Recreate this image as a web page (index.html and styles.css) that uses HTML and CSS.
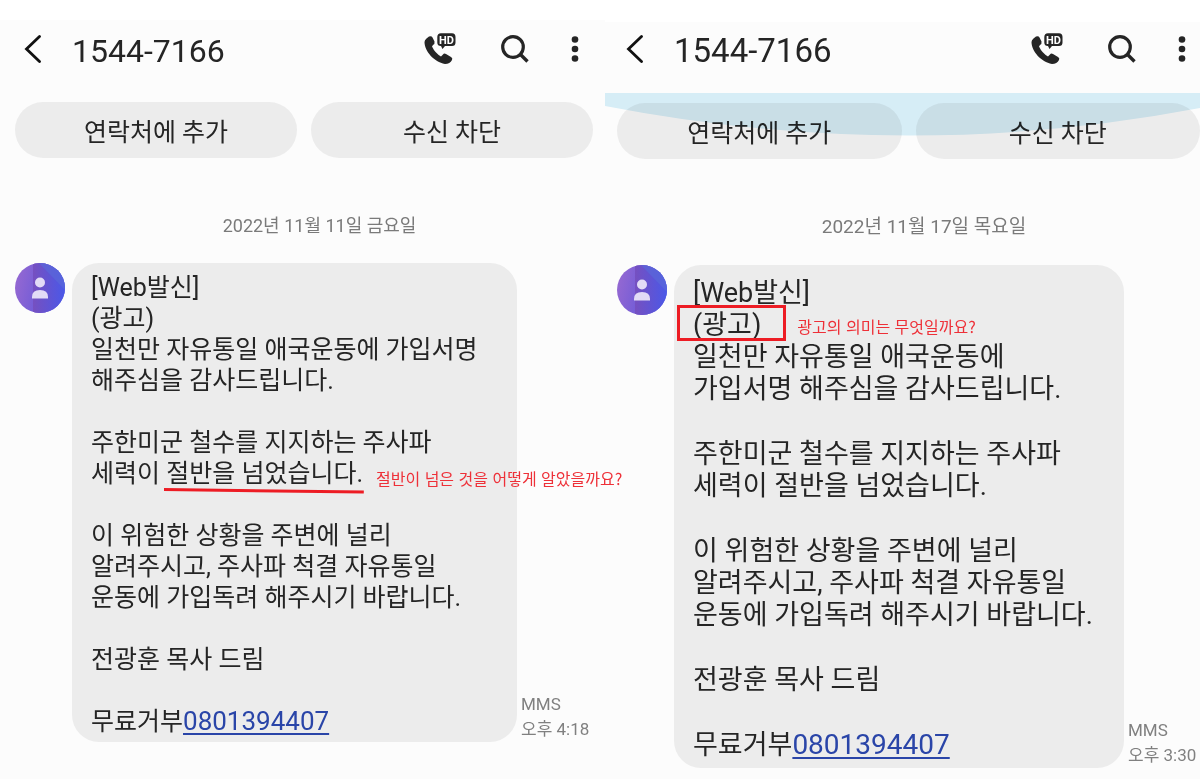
FILE: index.html
```html
<!DOCTYPE html>
<html lang="ko">
<head>
    <meta charset="utf-8">
    <title>1544-7166</title>
    <link rel="stylesheet" href="styles.css">
</head>
<body>
    <!-- Shared icons -->
    <svg class="sprite" width="0" height="0" aria-hidden="true">
        <defs>
            <linearGradient id="avatar-fill" x1="0" y1="0.4" x2="1" y2="0.6">
                <stop offset="0" stop-color="#9468d2"/>
                <stop offset="1" stop-color="#5050dc"/>
            </linearGradient>
            <linearGradient id="avatar-shade" x1="0" y1="0" x2="1" y2="0">
                <stop offset="0" stop-color="#7650c0"/>
                <stop offset="1" stop-color="#4a58e8"/>
            </linearGradient>
            <clipPath id="avatar-clip"><circle cx="25" cy="25" r="25"/></clipPath>
        </defs>
        <symbol id="back" viewBox="0 0 18 28">
            <path d="M15.500 1.500L2.500 14L15.500 26.500" fill="none" stroke="#111" stroke-width="2.800" stroke-linecap="round"/>
        </symbol>
        <symbol id="call" viewBox="0 0 32 32">
            <path d="M2.500 5.500L5 3.500Q7.500 2.500 8.500 4.500L10.500 8.500Q11 11 9 12L8 13.500Q11 20 17 23.500L19 21.500Q20 20 22 21L27 24Q29 25 28 27Q26 31 21 31C10 29 0.500 18 0.500 9Q0.500 7 2.500 5.500Z" fill="#252525"/>
            <path d="M17 0.200H28Q31.500 0.200 31.500 4V9.500Q31.500 13 28 13H21L18.500 16L17 13Q13.300 13 13.300 9.500V4Q13.300 0.200 17 0.200Z" fill="#252525"/>
        </symbol>
        <symbol id="search" viewBox="0 0 28 28">
            <circle cx="12" cy="12" r="10.300" fill="none" stroke="#252525" stroke-width="3.200"/>
            <path d="M19.500 19.500L26.500 26.500" stroke="#252525" stroke-width="3.400"/>
        </symbol>
        <symbol id="more" viewBox="0 0 8 28">
            <g fill="#252525">
                <circle cx="4" cy="4.500" r="3.300"/>
                <circle cx="4" cy="14" r="3.300"/>
                <circle cx="4" cy="23.500" r="3.300"/>
            </g>
        </symbol>
        <symbol id="person" viewBox="0 0 50 50">
            <g clip-path="url(#avatar-clip)">
                <rect width="50" height="50" fill="url(#avatar-fill)"/>
                <rect x="18" width="32" height="50" fill="url(#avatar-shade)"/>
                <path d="M24 0L50 27V0Z" fill="#5a68d8" opacity="0.700"/>
            </g>
            <circle cx="25" cy="19.500" r="5" fill="#e2dbf6"/>
            <path d="M17 35.500V34Q17 27 25 27Q33 27 33 34V35.500Z" fill="#e2dbf6"/>
        </symbol>
    </svg>

    <main class="compare">
        <section class="phone first">
            <header class="topbar">
                <button class="icon-btn back" aria-label="뒤로"><svg width="18" height="28"><use href="#back"/></svg></button>
                <h1>1544-7166</h1>
                <button class="icon-btn call" aria-label="전화"><svg width="32" height="32"><use href="#call"/><text x="22.500" y="10.500" text-anchor="middle" class="hd">HD</text></svg></button>
                <button class="icon-btn" aria-label="검색"><svg width="28" height="28"><use href="#search"/></svg></button>
                <button class="icon-btn more" aria-label="더보기"><svg width="8" height="28"><use href="#more"/></svg></button>
            </header>
            <div class="actions">
                <button class="pill">연락처에 추가</button>
                <button class="pill">수신 차단</button>
            </div>
            <p class="date">2022년 11월 11일 금요일</p>
            <div class="message">
                <svg class="avatar" width="50" height="50"><use href="#person"/></svg>
                <div class="bubble">
                    <p>[Web발신]<br>(광고)<br>일천만 자유통일 애국운동에 가입서명<br>해주심을 감사드립니다.</p>
                    <p>주한미군 철수를 지지하는 주사파<br>세력이 <span class="marked">절반을 넘었습니다.<svg class="underline" viewBox="0 0 202 6" preserveAspectRatio="none"><path d="M1 1.500L201 4" stroke="#ed1c24" stroke-width="3"/></svg><span class="note">절반이 넘은 것을 어떻게 알았을까요?</span></span></p>
                    <p>이 위험한 상황을 주변에 널리<br>알려주시고, 주사파 척결 자유통일<br>운동에 가입독려 해주시기 바랍니다.</p>
                    <p>전광훈 목사 드림</p>
                    <p>무료거부<a href="tel:0801394407">0801394407</a></p>
                </div>
                <div class="meta">MMS<br>오후 4:18</div>
            </div>
        </section>

        <section class="phone second">
            <header class="topbar">
                <button class="icon-btn back" aria-label="뒤로"><svg width="18" height="28"><use href="#back"/></svg></button>
                <h1>1544-7166</h1>
                <button class="icon-btn call" aria-label="전화"><svg width="32" height="32"><use href="#call"/><text x="22.500" y="10.500" text-anchor="middle" class="hd">HD</text></svg></button>
                <button class="icon-btn" aria-label="검색"><svg width="28" height="28"><use href="#search"/></svg></button>
                <button class="icon-btn more" aria-label="더보기"><svg width="8" height="28"><use href="#more"/></svg></button>
            </header>
            <div class="actions">
                <svg class="overscroll" viewBox="0 0 595 43" preserveAspectRatio="none"><path d="M0 0H595V15Q300 71 0 13Z" fill="#d9f0f9"/></svg>
                <button class="pill">연락처에 추가</button>
                <button class="pill">수신 차단</button>
            </div>
            <p class="date">2022년 11월 17일 목요일</p>
            <div class="message">
                <svg class="avatar" width="50" height="50"><use href="#person"/></svg>
                <div class="bubble">
                    <p>[Web발신]<br><span class="boxed">(광고)<span class="note">광고의 의미는 무엇일까요?</span></span><br>일천만 자유통일 애국운동에<br>가입서명 해주심을 감사드립니다.</p>
                    <p>주한미군 철수를 지지하는 주사파<br>세력이 절반을 넘었습니다.</p>
                    <p>이 위험한 상황을 주변에 널리<br>알려주시고, 주사파 척결 자유통일<br>운동에 가입독려 해주시기 바랍니다.</p>
                    <p>전광훈 목사 드림</p>
                    <p>무료거부<a href="tel:0801394407">0801394407</a></p>
                </div>
                <div class="meta">MMS<br>오후 3:30</div>
            </div>
        </section>
    </main>
</body>
</html>
```
FILE: styles.css
```css
* {
    box-sizing: border-box;
}

body {
    margin: 0;
    background-color: #ffffff;
    color: #252525;
    font-family: Roboto, "Noto Sans CJK KR", sans-serif;
}

h1, p {
    margin: 0;
    font-weight: normal;
}

button {
    border: none;
    padding: 0;
    color: inherit;
    font-family: inherit;
    cursor: pointer;
}

.sprite {
    position: absolute;
}

.hd {
    font-family: Roboto, sans-serif;
    font-size: 11px;
    font-weight: bold;
    fill: #ffffff;
}

.compare {
    display: grid;
    grid-template-columns: 605fr 595fr;
    min-height: 100vh;
    overflow: hidden;
}

.phone {
    min-width: 0;
    background-color: #fcfcfc;
    border-top: 20px solid #ffffff;
}

.first {
    position: relative;
    z-index: 1;
    padding: 0 12px 0 15px;
}

.second {
    border-top-width: 22px;
    padding: 0 0 0 12px;
}

/* Top bar */
.topbar {
    display: flex;
    align-items: center;
    height: 58px;
    padding: 0 14px 0 9px;
}

.second .topbar {
    height: 54px;
}

.topbar h1 {
    flex: 1;
    margin-left: 30px;
    padding-top: 4px;
    font-size: 33px;
    line-height: 40px;
}

.first .topbar h1 {
    font-size: 32px;
}

.icon-btn {
    display: flex;
    background: none;
}

.icon-btn.call {
    margin-right: 45px;
}

.icon-btn.more {
    margin-left: 42px;
}

/* Action buttons */
.actions {
    position: relative;
    display: flex;
    gap: 14px;
    padding-top: 24px;
}

.second .actions {
    padding-top: 27px;
}

.pill {
    flex: 1;
    height: 56px;
    border-radius: 28px;
    background-color: #ececec;
    font-size: 25px;
}

.overscroll {
    position: absolute;
    top: 17px;
    left: -12px;
    width: calc(100% + 12px);
    height: 43px;
    mix-blend-mode: multiply;
    pointer-events: none;
}

.date {
    margin: 55px 0 24px;
    padding-left: 31px;
    color: #7a7a7a;
    font-size: 18px;
    line-height: 26px;
    text-align: center;
}

.second .date {
    margin-bottom: 25px;
    font-size: 19px;
}

/* Message */
.message {
    display: flex;
    align-items: flex-end;
}

.first .message {
    margin-right: -12px;
}

.avatar {
    align-self: flex-start;
    margin-right: 7px;
}

.bubble {
    flex: 1;
    padding: 9px 0 5px 19px;
    border-radius: 27px;
    background-color: #ececec;
    font-size: 25px;
    line-height: 31px;
    white-space: nowrap;
}

.bubble p + p {
    margin-top: 31px;
}

.second .bubble {
    padding: 12px 0 7px 19px;
    font-size: 27px;
    line-height: 32px;
}

.second .bubble p + p {
    margin-top: 33px;
}

.bubble a {
    color: #2a45a8;
    font-size: 26px;
    text-decoration-thickness: 2px;
    text-underline-offset: 3px;
}

.second .bubble a {
    font-size: 28px;
}

.meta {
    width: 88px;
    padding-left: 4px;
    color: #808080;
    font-size: 17px;
    line-height: 25px;
    white-space: nowrap;
}

.second .meta {
    width: 76px;
}

/* Red annotations */
.marked, .boxed {
    position: relative;
}

.note {
    position: absolute;
    left: 100%;
    bottom: 0;
    color: #ee3038;
    font-family: "Noto Sans CJK KR", sans-serif;
    font-size: 16px;
    line-height: 20px;
}

.marked .note {
    margin-left: 13px;
}

.boxed .note {
    bottom: 5px;
    margin-left: 36px;
}

.underline {
    position: absolute;
    left: -3px;
    bottom: -6px;
    width: calc(100% + 5px);
    height: 6px;
}

.boxed::before {
    content: "";
    position: absolute;
    top: -4px;
    right: -25px;
    bottom: 0;
    left: -16px;
    border: 3px solid #ed1c24;
}
```
